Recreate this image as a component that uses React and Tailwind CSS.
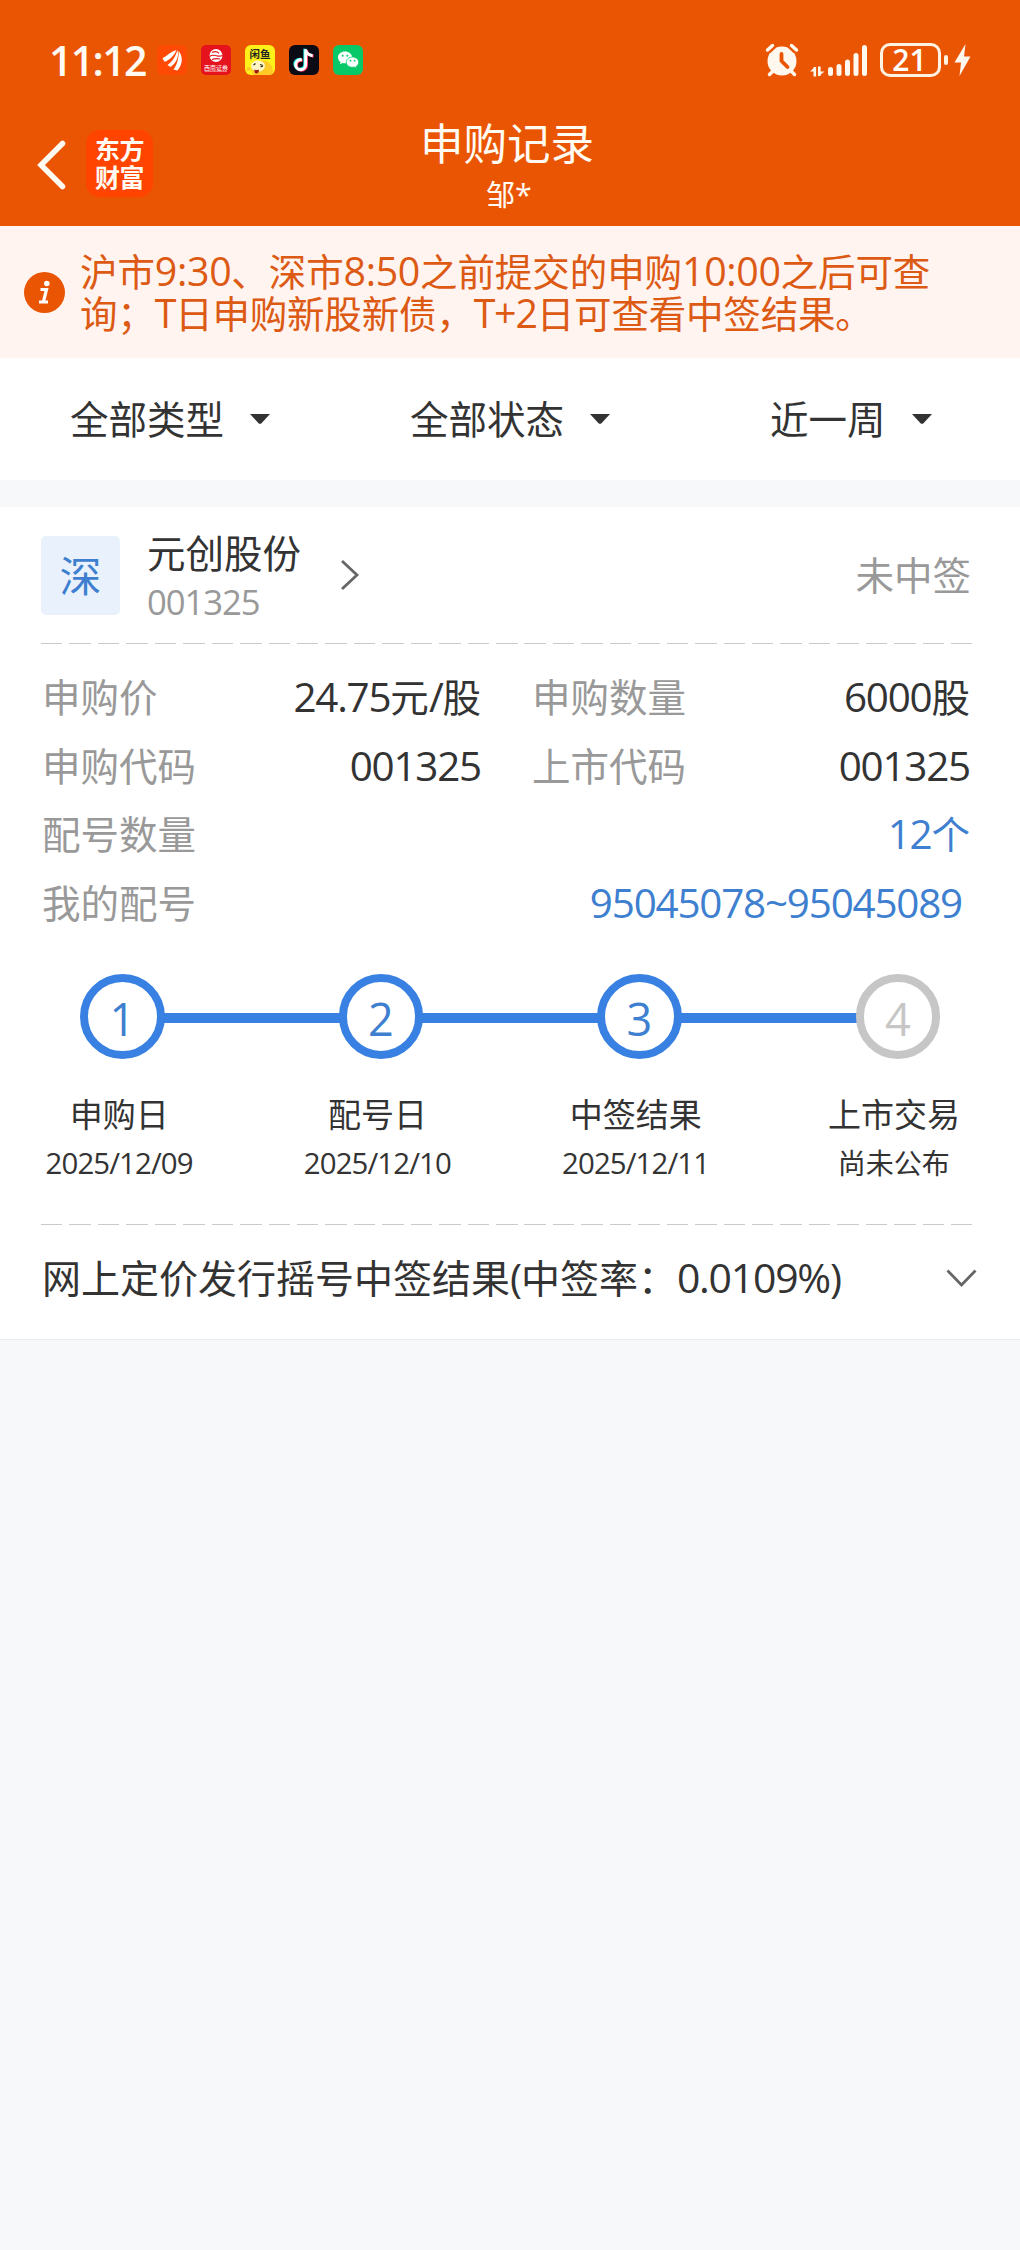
import React from "react";

// Sets Latin runs in a lighter geometric face, and leaves Chinese in the page font.
function T({ children, wide }) {
  const parts = String(children).split(/([\x21-\x7e]+)/);
  return parts.map((p, i) =>
    i % 2 ? (
      <span
        key={i}
        className={
          "inline-block font-['Open_Sans'] text-[1.05em] leading-none " +
          (wide ? "tracking-[-0.009em]" : "tracking-[-0.03em]")
        }
      >
        {p}
      </span>
    ) : (
      p
    )
  );
}

function AppIcons() {
  return (
    <div className="flex gap-[14px]">
      <svg width="30" height="30" viewBox="0 0 30 30">
        <rect width="30" height="30" rx="6" fill="#ff4a05" />
        <g fill="#fff">
          <path d="M5.500 13.200C10 11 14 6.500 19.500 5C17 11 12 15.500 7.500 16.800Z" />
          <path d="M10.500 20C15 17 18.500 11.500 20.500 5.200C22.500 12 18.500 18.500 13.500 22Z" />
          <path d="M16.500 24.500C20 20 22 13 21.600 6C26 11 26 19 20.500 25.500Z" />
        </g>
      </svg>
      <svg width="30" height="30" viewBox="0 0 30 30">
        <rect width="30" height="30" rx="5" fill="#e5131d" />
        <circle cx="15" cy="10.500" r="6.500" fill="#fff" />
        <path d="M11 7.500q4-2 7 .8M8.500 11.500q3-2 7-.8t6-.5M11 14.500q4-1.500 8-.5" stroke="#e5131d" strokeWidth="1.200" fill="none" />
        <text x="15" y="24.500" textAnchor="middle" fontSize="6" fill="#fff" fontFamily="Noto Sans CJK SC">西南证券</text>
        <path d="M4 26.500h22" stroke="#f5a0a0" strokeWidth=".7" />
      </svg>
      <svg width="30" height="30" viewBox="0 0 30 30">
        <rect width="30" height="30" rx="6" fill="#fff01a" />
        <path d="M6 22C6 17 11 15.500 16 16C23 15 28 20 28 27Q27 30 24 30H9Q6 27 6 22Z" fill="#ffc928" />
        <ellipse cx="13" cy="21" rx="7" ry="5.500" fill="#fff6c8" />
        <path d="M8.500 20l2-1.500M15 19.500l3 1M15.500 22l2.500-1" stroke="#332a10" strokeWidth="1.300" />
        <path d="M9.500 24.500q2.500 1 4.500 0q0 4-2.500 4t-2-4Z" fill="#a01c10" />
        <circle cx="3.500" cy="24" r="2" fill="#ffc928" />
        <text x="15" y="13" textAnchor="middle" fontSize="10.500" fontWeight="700" fill="#222" fontFamily="Noto Sans CJK SC">闲鱼</text>
      </svg>
      <svg width="30" height="30" viewBox="0 0 30 30">
        <rect width="30" height="30" rx="6" fill="#0b0b16" />
        <g fill="none" strokeWidth="2.900">
          <path d="M15.800 3.700v15.400a5 5 0 1 1-5-5h1.200M15.800 4.500q1 5 7 5.700" stroke="#25f4ee" />
          <path d="M17.600 4.900v15.400a5 5 0 1 1-5-5h1M17.600 5.500q1 5 7 5.700" stroke="#fe2c55" />
          <path d="M16.700 4.300v15.400a5 5 0 1 1-5-5h1.200M16.700 5q1 5 7 5.700" stroke="#fff" />
        </g>
      </svg>
      <svg width="30" height="30" viewBox="0 0 30 30">
        <rect width="30" height="30" rx="6" fill="#07c968" />
        <path d="M12 6.500c-4 0-7 2.600-7 5.900 0 1.900 1 3.500 2.600 4.600L7 19.200l2.500-1.300c.8.200 1.600.3 2.500.3 4 0 7.200-2.600 7.200-5.800S16 6.500 12 6.500Z" fill="#fff" />
        <path d="M19.500 12c-3.400 0-6.200 2.300-6.200 5.200s2.800 5.100 6.200 5.100c.8 0 1.500-.1 2.200-.3l2.100 1.200-.5-2c1.500-1 2.400-2.400 2.400-4 0-2.900-2.800-5.200-6.200-5.200Z" fill="#fff" stroke="#07c968" strokeWidth=".8" />
        <g fill="#07c968">
          <circle cx="9.700" cy="10.800" r="1" />
          <circle cx="14.300" cy="10.800" r="1" />
          <circle cx="17.500" cy="15.700" r=".9" />
          <circle cx="21.600" cy="15.700" r=".9" />
        </g>
      </svg>
    </div>
  );
}

function StatusIcons() {
  return (
    <div className="flex items-center text-[#fff8ee]">
      <svg width="34" height="34" viewBox="0 0 34 34" fill="none">
        <circle cx="17" cy="18" r="14.500" fill="currentColor" />
        <path d="M16.500 11V18l6 6" stroke="#ea5504" strokeWidth="3.800" strokeLinecap="round" strokeLinejoin="round" />
        <path d="M2.500 7 7.500 2.500M31.500 7 26.500 2.500M8 28l-3.500 3.500M26 28l3.500 3.500" stroke="currentColor" strokeWidth="3.500" strokeLinecap="round" />
        <path d="M5 9.500 10.500 4.200M29 9.500 23.500 4.200" stroke="#ea5504" strokeWidth="1.500" />
      </svg>
      <svg className="ml-[11px]" width="58" height="34" viewBox="0 0 58 34">
        <path d="M0 28.500 5 24v4.500ZM14.500 28.500 9 33v-4.500Z" fill="currentColor" />
        <path d="M4.800 24v9.500M9.300 23.500v9.500" stroke="currentColor" strokeWidth="2.600" />
        <g stroke="currentColor" strokeWidth="5" strokeLinecap="round">
          <path d="M20.500 26.500v4M29 23.500v7M37.500 19v11.500M46 12.500v18M54.500 4.500v26" />
        </g>
      </svg>
      <div className="ml-3 flex h-[34px] w-[61px] items-center justify-center rounded-[10px] border-[3px] border-[#fff3e4] pr-[2px] font-['Open_Sans'] text-[30px] font-semibold leading-none text-white">
        21
      </div>
      <div className="ml-[3px] h-[10px] w-1 rounded-full bg-[#fff3e4]" />
      <svg className="ml-[6px]" width="17" height="34" viewBox="0 0 17 34">
        <path d="M11.500 1 .5 19.500H7L5.500 33 16.500 13.500H10Z" fill="currentColor" />
      </svg>
    </div>
  );
}

function Dashes() {
  return (
    <div className="h-px w-[931px] bg-[repeating-linear-gradient(90deg,#cacaca_0_21.5px,transparent_21.5px_28.44px)]" />
  );
}

function Filter({ label, className = "" }) {
  return (
    <div className={"flex items-center gap-[26px] " + className}>
      <span className="pb-[3px]">{label}</span>
      <svg className="-mt-[1px]" width="20" height="10" viewBox="0 0 20 10">
        <path d="M0 0h20l-8.500 9.200q-1.500 1.200-3 0Z" fill="#333" />
      </svg>
    </div>
  );
}

function Field({ label, value, className = "" }) {
  return (
    <div className={"flex items-center justify-between " + className}>
      <span className="pb-[4px] text-[#999]">{label}</span>
      <span className="pb-[1px]">
        <T>{value}</T>
      </span>
    </div>
  );
}

const steps = [
  { label: "申购日", date: "2025/12/09" },
  { label: "配号日", date: "2025/12/10" },
  { label: "中签结果", date: "2025/12/11" },
  { label: "上市交易", date: "尚未公布" },
];

export default function App() {
  return (
    <div className="h-[2250px] w-[1020px] overflow-hidden whitespace-nowrap bg-[#f7f8fa] font-['Noto_Sans_CJK_SC',sans-serif] text-[38.5px] leading-none text-[#333]">
      <header className="h-[226px] bg-[#ea5504] text-[#fffaf2]">
        <div className="flex h-[120px] items-center justify-between pl-[49px] pr-[49px]">
          <div className="flex items-center">
            <span className="w-[108px] font-['Open_Sans'] text-[41px] font-semibold tracking-[-0.04em]">11:12</span>
            <AppIcons />
          </div>
          <StatusIcons />
        </div>
        <div className="grid h-[90px] grid-cols-[1fr_auto_1fr]">
          <div className="flex items-start pl-[37px] pt-[10px]">
            <svg className="mt-[10px]" width="29" height="50" viewBox="0 0 29 50" fill="none">
              <path d="M25.500 3.500 4 25l21.500 21.500" stroke="currentColor" strokeWidth="5.500" strokeLinecap="round" strokeLinejoin="miter" />
            </svg>
            <div className="ml-5 grid h-[67px] w-[67px] place-content-center rounded-[14px] bg-[#ff4400] pb-[3px] text-[25px] font-bold leading-[28px] tracking-[-0.02em]">
              <span>东方</span>
              <span>财富</span>
            </div>
          </div>
          <div className="flex flex-col items-center pr-[6px]">
            <h1 className="text-[43.5px] leading-[44px]">申购记录</h1>
            <p className="ml-[3px] mt-[14px] text-[29px] leading-[30px]">
              <T>邹*</T>
            </p>
          </div>
          <div />
        </div>
      </header>

      <section className="flex h-[132px] items-center bg-[#fff4ef] pl-6 text-[#dc5a14]">
        <svg width="41" height="41" viewBox="0 0 41 41">
          <circle cx="20.500" cy="20.500" r="20.500" fill="#ea5504" />
          <circle cx="22.800" cy="11.500" r="2.800" fill="#fff" />
          <path d="M16.500 17.500h6l-3 12M15 30h9" stroke="#fff" strokeWidth="3.200" fill="none" />
        </svg>
        <div className="ml-[15px] pb-[2px] text-[37.500px] leading-[42px]">
          <p className="tracking-[-0.002em]">
            <T wide>沪市9:30、深市8:50之前提交的申购10:00之后可查</T>
          </p>
          <p className="tracking-[-0.005em]">
            <T>询；T日申购新股新债，T+2日可查看中签结果。</T>
          </p>
        </div>
      </section>

      <nav className="flex h-[122px] items-center bg-white pl-[70px]">
        <Filter label="全部类型" className="w-[340px]" />
        <Filter label="全部状态" className="w-[360px]" />
        <Filter label="近一周" />
      </nav>

      <main className="mt-[27px] h-[833px] border-b border-[#eaebed] bg-white pl-[41px]">
        <div className="flex h-[136px] items-center pr-[49px]">
          <div className="grid h-[79px] w-[79px] place-content-center rounded-[5px] bg-[#e9f2fc] pb-[3px] text-[42px] text-[#3e7fd0]">深</div>
          <div className="ml-[27px] pt-[2px]">
            <div className="leading-[44px]">元创股份</div>
            <div className="mt-[6px] text-[33px] leading-[44px] text-[#999]">
              <T>001325</T>
            </div>
          </div>
          <svg className="ml-[39px]" width="20" height="32" viewBox="0 0 20 32" fill="none">
            <path d="M2 2l15 14L2 30" stroke="#666" strokeWidth="2.800" />
          </svg>
          <span className="ml-auto pb-[3px] text-[#999]">未中签</span>
        </div>
        <Dashes />
        <div className="mt-[19px] grid grid-cols-[439px_438px] gap-x-[51px] pl-[1px] [grid-auto-rows:68.600px]">
          <Field label="申购价" value="24.75元/股" />
          <Field label="申购数量" value="6000股" />
          <Field label="申购代码" value="001325" />
          <Field label="上市代码" value="001325" />
          <Field label="配号数量" value="12个" className="col-span-2 [&>span:last-child]:text-[#3e7fd0]" />
          <Field label="我的配号" value="95045078~95045089" className="col-span-2 pr-2 [&>span:last-child]:text-[#3e7fd0]" />
        </div>

        <div className="mt-[37px] flex items-center pl-[39px]">
          {steps.map((s, i) => (
            <React.Fragment key={s.label}>
              {i > 0 && <div className="-mx-[2px] mt-[2px] h-[10px] w-[178px] bg-[#3881e2]" />}
              <div
                className={
                  "relative grid h-[84.500px] w-[84.500px] place-content-center rounded-full border-8 bg-white pt-[3px] font-['Open_Sans'] text-[45px] " +
                  (i === 3 ? "border-[#c6c6c6] text-[#c6c6c6]" : "border-[#3881e2] text-[#3e7fd0]")
                }
              >
                {i + 1}
              </div>
            </React.Fragment>
          ))}
        </div>
        <div className="-ml-[51px] mt-[31px] grid w-[1033px] grid-cols-4 text-center">
          {steps.map((s) => (
            <div key={s.label}>
              <div className="text-[33px] leading-[46px]">{s.label}</div>
              <div className="mt-[2px] text-[28px] leading-[48px]">
                <T>{s.date}</T>
              </div>
            </div>
          ))}
        </div>
        <div className="mt-[38px]">
          <Dashes />
        </div>
        <div className="flex h-[108px] items-center justify-between pr-[43px] text-[39px]">
          <span className="pb-[2px] pl-[1px]">
            <T>网上定价发行摇号中签结果(中签率：0.0109%)</T>
          </span>
          <svg width="31" height="19" viewBox="0 0 31 19" fill="none">
            <path d="M1.500 1.500l14 14.500 14-14.500" stroke="#666" strokeWidth="2.800" />
          </svg>
        </div>
      </main>
    </div>
  );
}
